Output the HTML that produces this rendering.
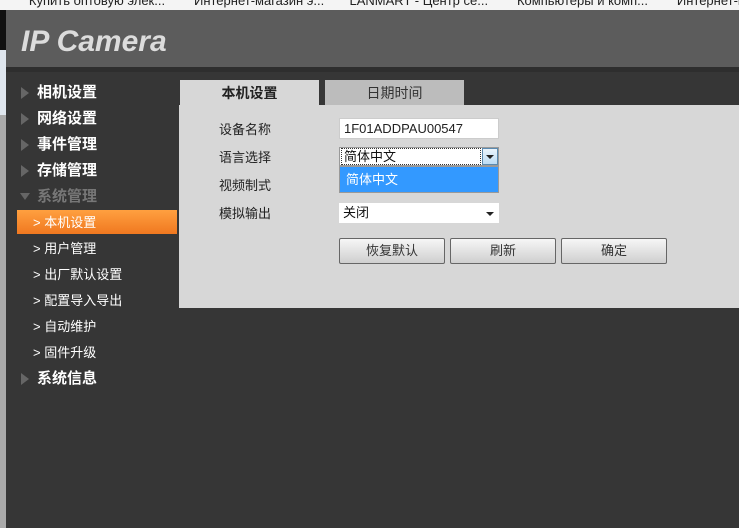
<!DOCTYPE html>
<html><head><meta charset="utf-8"><style>
*{margin:0;padding:0;box-sizing:border-box}
body{width:739px;height:528px;overflow:hidden;background:#363636;position:relative;font-family:"Liberation Sans","Noto Sans CJK SC",sans-serif}
.a{position:absolute}
.bm{left:0;top:0;width:739px;height:10px;background:#f4f4f4;overflow:hidden;font-size:13px;color:#222;line-height:2px;white-space:nowrap}
.hdr{left:0;top:10px;width:739px;height:57px;background:#5c5c5c}
.logo{left:21px;top:25px;font-size:30px;font-weight:bold;font-style:italic;color:#dcdcdc;letter-spacing:0}
.strip{left:0;top:10px;width:6px;height:518px;background:#aaa}
.m{left:37px;font-size:15px;font-weight:bold;color:#fff;line-height:20px}
.tri{left:21px;width:0;height:0;border-left:8px solid #666;border-top:6px solid transparent;border-bottom:6px solid transparent}
.s{left:33px;font-size:13px;color:#fff;line-height:18px}
.lbl{left:219px;font-size:13px;color:#222}
.btn{top:238px;height:26px;border:1px solid #666;border-radius:2px;background:linear-gradient(#f6f6f6,#cfcfcf);font-size:13px;color:#333;text-align:center;line-height:24px}
</style></head><body>
<div class="a bm">&nbsp;&nbsp;&nbsp;&nbsp;&nbsp;&nbsp;&nbsp;&nbsp;Купить оптовую элек...&nbsp;&nbsp;&nbsp;&nbsp;&nbsp;&nbsp;&nbsp;&nbsp;Интернет-магазин э...&nbsp;&nbsp;&nbsp;&nbsp;&nbsp;&nbsp;&nbsp;LANMART - Центр се...&nbsp;&nbsp;&nbsp;&nbsp;&nbsp;&nbsp;&nbsp;&nbsp;Компьютеры и комп...&nbsp;&nbsp;&nbsp;&nbsp;&nbsp;&nbsp;&nbsp;&nbsp;Интернет-м</div>
<div class="a hdr"></div>
<div class="a" style="left:0;top:67px;width:739px;height:5px;background:#2e2e2e"></div>
<div class="a logo">IP Camera</div>
<div class="a strip"></div>
<div class="a" style="left:0;top:10px;width:6px;height:40px;background:#111"></div>
<div class="a" style="left:0;top:50px;width:6px;height:65px;background:#dfe6ee"></div>

<div class="a tri" style="top:87px"></div><div class="a m" style="top:83px">相机设置</div>
<div class="a tri" style="top:113px"></div><div class="a m" style="top:109px">网络设置</div>
<div class="a tri" style="top:139px"></div><div class="a m" style="top:135px">事件管理</div>
<div class="a tri" style="top:165px"></div><div class="a m" style="top:161px">存储管理</div>
<div class="a" style="left:20px;top:193px;border-top:7px solid #666;border-left:5px solid transparent;border-right:5px solid transparent"></div>
<div class="a m" style="top:187px;color:#777">系统管理</div>
<div class="a" style="left:17px;top:210px;width:160px;height:24px;background:linear-gradient(#ffa040,#f07820)"></div>
<div class="a s" style="top:214px;color:#fff">&gt; 本机设置</div>
<div class="a s" style="top:240px">&gt; 用户管理</div>
<div class="a s" style="top:266px">&gt; 出厂默认设置</div>
<div class="a s" style="top:292px">&gt; 配置导入导出</div>
<div class="a s" style="top:318px">&gt; 自动维护</div>
<div class="a s" style="top:344px">&gt; 固件升级</div>
<div class="a tri" style="top:373px"></div><div class="a m" style="top:369px">系统信息</div>

<div class="a" style="left:179px;top:105px;width:560px;height:203px;background:#d7d7d7"></div>
<div class="a" style="left:180px;top:80px;width:139px;height:26px;background:#d7d7d7;font-size:14px;font-weight:bold;color:#222;text-align:center;line-height:26px">本机设置</div>
<div class="a" style="left:325px;top:80px;width:139px;height:25px;background:#bcbcbc;font-size:14px;color:#333;text-align:center;line-height:26px">日期时间</div>

<div class="a lbl" style="top:119px">设备名称</div>
<div class="a lbl" style="top:147px">语言选择</div>
<div class="a lbl" style="top:175px">视频制式</div>
<div class="a lbl" style="top:203px">模拟输出</div>

<div class="a" style="left:339px;top:118px;width:160px;height:21px;background:#fff;border:1px solid #ccc;font-size:13px;color:#222;line-height:19px;padding-left:4px">1F01ADDPAU00547</div>
<div class="a" style="left:339px;top:147px;width:160px;height:19px;background:#fff;border:1px solid #999"></div>
<div class="a" style="left:341px;top:148px;width:140px;height:17px;border:1px dotted #333;font-size:13px;line-height:15px;color:#111;padding-left:2px">简体中文</div>
<div class="a" style="left:482px;top:148px;width:16px;height:17px;background:linear-gradient(#eaf4fc,#bcdcf4);border:1px solid #5a8ab0"></div>
<div class="a" style="left:486px;top:155px;border-top:4px solid #222;border-left:4px solid transparent;border-right:4px solid transparent"></div>
<div class="a" style="left:339px;top:166px;width:160px;height:27px;background:#3399ff;border:1px solid #999;font-size:13px;color:#fff;line-height:26px;padding-left:6px">简体中文</div>
<div class="a" style="left:339px;top:203px;width:160px;height:20px;background:#fff;font-size:13px;line-height:20px;color:#111;padding-left:4px">关闭</div>
<div class="a" style="left:486px;top:212px;border-top:4px solid #222;border-left:4px solid transparent;border-right:4px solid transparent"></div>

<div class="a btn" style="left:339px;width:106px">恢复默认</div>
<div class="a btn" style="left:450px;width:106px">刷新</div>
<div class="a btn" style="left:561px;width:106px">确定</div>
</body></html>
